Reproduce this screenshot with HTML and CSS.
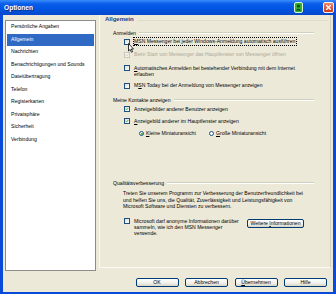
FILE: index.html
```html
<!DOCTYPE html>
<html lang="de">
<head>
    <meta charset="UTF-8">
    <title>Optionen</title>
    <link rel="stylesheet" href="styles.css">
</head>
<body>
    <div class="window">
        <div class="titlebar">
            <span class="title">Optionen</span>
            <svg class="tb-msn" width="9" height="11" viewBox="0 0 9 11">
                <rect x="0.5" y="0.5" width="8" height="10" rx="1.5" fill="#2fae3a" stroke="#d9f5d0"/>
                <circle cx="4.5" cy="4" r="1.6" fill="#0d4d12"/>
                <path d="M1.8 8.5 Q4.5 4.8 7.2 8.5 Z" fill="#0d4d12"/>
            </svg>
            <svg class="tb-close" width="11" height="11" viewBox="0 0 11 11">
                <defs>
                    <linearGradient id="cl" x1="0" y1="0" x2="0" y2="1">
                        <stop offset="0" stop-color="#f08a6b"/>
                        <stop offset="1" stop-color="#c8321a"/>
                    </linearGradient>
                </defs>
                <rect x="0.5" y="0.5" width="10" height="10" rx="1.5" fill="url(#cl)" stroke="#f4f4f4"/>
                <path d="M3.3 3.3 L7.7 7.7 M7.7 3.3 L3.3 7.7" stroke="#fff" stroke-width="1.3"/>
            </svg>
        </div>
        <div class="frame">
            <div class="content">
                <ul class="nav">
                    <li>Persönliche Angaben</li>
                    <li class="active">Allgemein</li>
                    <li>Nachrichten</li>
                    <li>Benachrichtigungen und Sounds</li>
                    <li>Dateiübertragung</li>
                    <li>Telefon</li>
                    <li>Registerkarten</li>
                    <li>Privatsphäre</li>
                    <li>Sicherheit</li>
                    <li>Verbindung</li>
                </ul>
                <div class="panel">
                    <div class="panel-title">Allgemein</div>

                    <div class="group-label g-login">Anmelden</div>
                    <div class="opt r-auto">
                        <span class="cb"></span>
                        <span class="focus"><u>M</u>SN Messenger bei jeder Windows-Anmeldung automatisch ausführen</span>
                    </div>
                    <div class="opt disabled r-open">
                        <span class="cb checked"><svg width="6" height="6" viewBox="0 0 6 6"><path d="M1 2.8 L2.4 4.3 L5 1.4" /></svg></span>
                        <span>Beim Start von Messenger das Hauptfenster von Messenger öffnen</span>
                    </div>
                    <div class="opt two r-inet">
                        <span class="cb"></span>
                        <span><u>A</u>utomatisches Anmelden bei bestehender Verbindung mit dem Internet<br>erlauben</span>
                    </div>
                    <div class="opt r-today">
                        <span class="cb"></span>
                        <span>M<u>S</u>N Today bei der Anmeldung von Messenger anzeigen</span>
                    </div>

                    <div class="group-label g-contacts">Meine Kontakte anzeigen</div>
                    <div class="opt r-pics">
                        <span class="cb checked"><svg width="6" height="6" viewBox="0 0 6 6"><path d="M1 2.8 L2.4 4.3 L5 1.4" /></svg></span>
                        <span>Anzeigebilder anderer Benutzer anzeigen</span>
                    </div>
                    <div class="opt r-main">
                        <span class="cb checked"><svg width="6" height="6" viewBox="0 0 6 6"><path d="M1 2.8 L2.4 4.3 L5 1.4" /></svg></span>
                        <span><u>A</u>nzeigebild anderer im Hauptfenster anzeigen</span>
                    </div>
                    <div class="radios">
                        <span class="radio-item"><span class="rb on"></span><span><u>K</u>leine Miniaturansicht</span></span>
                        <span class="radio-item"><span class="rb"></span><span><u>G</u>roße Miniaturansicht</span></span>
                    </div>

                    <div class="group-label g-quality">Qualitätsverbesserung</div>
                    <p class="intro">Treten Sie unserem Programm zur Verbesserung der Benutzerfreundlichkeit bei<br>und helfen Sie uns, die Qualität, Zuverlässigkeit und Leistungsfähigkeit von<br>Microsoft Software und Diensten zu verbessern.</p>
                    <div class="feedback">
                        <div class="opt three">
                            <span class="cb"></span>
                            <span>Microsoft darf anonyme Informationen darüber<br>sammeln, wie ich den MSN Messenger<br>verwende.</span>
                        </div>
                        <button class="btn more">Weitere <u>I</u>nformationen</button>
                    </div>

                    <svg class="cursor" width="6" height="10" viewBox="0 0 6 10">
                        <path d="M0.5 0.5 L0.5 8 L2.2 6.4 L3.4 9.2 L4.6 8.7 L3.4 6 L5.5 6 Z" fill="#fff" stroke="#000" stroke-width="0.8"/>
                    </svg>
                </div>
            </div>
            <div class="footer">
                <button class="btn">OK</button>
                <button class="btn">Abbrechen</button>
                <button class="btn"><u>Ü</u>bernehmen</button>
                <button class="btn">Hilfe</button>
            </div>
        </div>
    </div>
</body>
</html>
```

FILE: styles.css
```css
* {
    box-sizing: border-box;
}
body {
    margin: 0;
    font-family: 'Liberation Sans', Arial, sans-serif;
    font-size: 5.1px;
    color: #000;
    background: #fff;
}
.window {
    width: 336px;
    height: 294px;
    display: flex;
    flex-direction: column;
    background: #0a4ad8;
}
.titlebar {
    height: 15px;
    display: flex;
    align-items: center;
    padding: 0 2px 0 4px;
    background: linear-gradient(#3a8cfb, #0a5ee9 25%, #0054e3 60%, #0648cc);
    color: #fff;
}
.title {
    flex: 1;
    font-weight: bold;
    font-size: 6.6px;
    text-shadow: 1px 1px 0 #0c2a8c;
}
.tb-msn {
    margin-right: 20px;
}
.frame {
    flex: 1;
    display: flex;
    flex-direction: column;
    margin: 0 3px 2px 3px;
    background: #ece9d8;
}
.content {
    height: 256px;
    display: flex;
    align-items: flex-start;
}
.nav {
    list-style: none;
    margin: 5px 0 0 2px;
    padding: 0;
    width: 91px;
    height: 251px;
    background: #fff;
    border: 1px solid #8c8c8a;
}
.nav li {
    height: 12.5px;
    line-height: 11.5px;
    margin: 0 1px;
    padding-left: 4px;
    white-space: nowrap;
}
.nav li.active {
    background: #316ac5;
    color: #fff;
}
.panel {
    position: relative;
    flex: 1;
    height: 253px;
    margin: 0 2px 0 3px;
    padding-left: 13px;
    border-left: 1px solid #fbfaf5;
    border-bottom: 1px solid #fbfaf5;
    border-right: 1px solid #d6d2c2;
    display: flex;
    flex-direction: column;
    align-items: flex-start;
}
.panel-title {
    margin-left: -8px;
    align-self: stretch;
    display: flex;
    align-items: center;
    height: 8px;
    font-weight: bold;
    font-size: 6px;
    color: #1a3c8c;
}
.panel-title::after {
    content: "";
    flex: 1;
    margin: 2px 2px 0 4px;
    border-top: 1px solid #e0dccb;
}
.group-label {
    align-self: stretch;
    display: flex;
    align-items: center;
    height: 7px;
    margin-right: 16px;
}
.group-label::after {
    content: "";
    flex: 1;
    margin-left: 3px;
    border-top: 1px solid #d0d0bf;
    border-bottom: 1px solid #fff;
}
.g-login {
    margin-top: 6.5px;
}
.g-contacts {
    margin-top: 7px;
}
.g-quality {
    margin-top: 42px;
}
.opt {
    display: flex;
    align-items: center;
    margin-left: 11px;
    line-height: 7px;
    white-space: nowrap;
}
.opt.two,
.opt.three {
    align-items: flex-start;
    line-height: 6.3px;
}
.opt.two .cb,
.opt.three .cb {
    margin-top: 0.5px;
}
.cb {
    flex: none;
    width: 6px;
    height: 6px;
    margin-right: 4px;
    border: 1px solid #1c5180;
    background: linear-gradient(135deg, #dcdcd7, #fff);
    display: flex;
    align-items: center;
    justify-content: center;
}
.cb svg {
    display: block;
}
.cb path {
    fill: none;
    stroke: #21a121;
    stroke-width: 1.2;
}
.disabled {
    color: #aca899;
}
.disabled .cb {
    border-color: #cac8bb;
    background: #f4f3ee;
}
.disabled .cb path {
    stroke: #cac8bb;
}
.focus {
    outline: 1px dotted #000;
    outline-offset: 0;
    padding-right: 1px;
}
.r-auto {
    margin-top: 1.5px;
}
.r-open {
    margin-top: 6px;
}
.r-inet {
    margin-top: 6.5px;
}
.r-today {
    margin-top: 5px;
}
.r-pics {
    margin-top: 2.5px;
}
.r-main {
    margin-top: 5px;
}
.radios {
    display: flex;
    margin: 5.5px 0 0 26px;
    line-height: 7px;
}
.radio-item {
    display: flex;
    align-items: center;
    width: 70px;
}
.rb {
    width: 5px;
    height: 5px;
    margin-right: 2px;
    border: 1px solid #1c5180;
    border-radius: 50%;
    background: #fff;
    position: relative;
}
.rb.on::after {
    content: "";
    position: absolute;
    left: 0.5px;
    top: 0.5px;
    width: 2px;
    height: 2px;
    border-radius: 50%;
    background: #21a121;
}
.intro {
    margin: 4.3px 0 0 10px;
    line-height: 6.5px;
    white-space: nowrap;
}
.feedback {
    display: flex;
    align-items: flex-start;
    margin-top: 7.8px;
}
.feedback .opt {
    width: 123px;
}
.btn {
    width: 43px;
    height: 9px;
    padding: 0;
    font-family: inherit;
    font-size: 5.1px;
    line-height: 7px;
    color: #000;
    border: 1px solid #003c74;
    border-radius: 2px;
    background: linear-gradient(#fff, #f0efe8 60%, #d8d5c6);
}
.btn.more {
    width: 57px;
    margin-top: 1px;
}
.cursor {
    position: absolute;
    left: 28px;
    top: 28px;
}
.footer {
    flex: 1;
    display: flex;
    justify-content: flex-end;
    gap: 6.5px;
    padding: 7px 6px 0 0;
}
```
